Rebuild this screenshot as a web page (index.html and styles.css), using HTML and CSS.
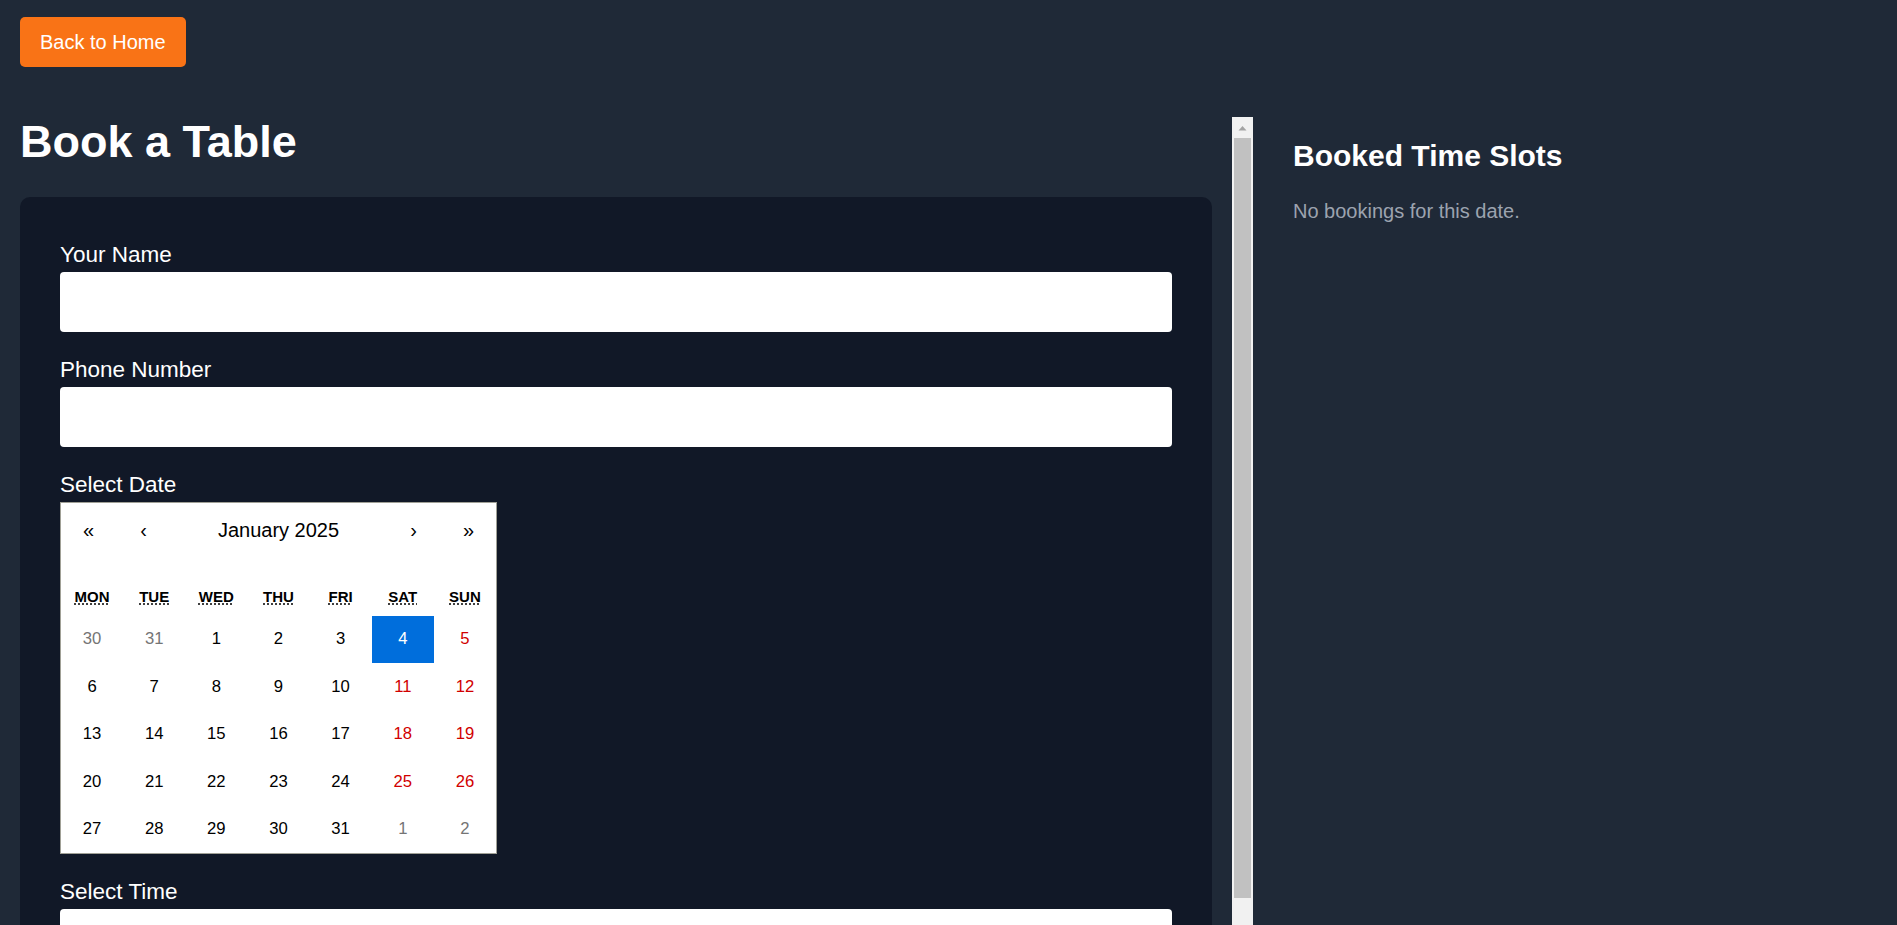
FILE: index.html
```html
<!DOCTYPE html>
<html lang="en">
<head>
<meta charset="utf-8">
<title>Book a Table</title>
<link rel="stylesheet" href="styles.css">
</head>
<body>
<div class="page">
  <button class="back-btn" type="button">Back to Home</button>
  <div class="main">
    <section class="booking">
      <div class="booking-scroll">
        <h1 class="title">Book a Table</h1>
        <form class="card">
          <div class="field">
            <label class="label" for="name">Your Name</label>
            <input class="input" id="name" type="text">
          </div>
          <div class="field">
            <label class="label" for="phone">Phone Number</label>
            <input class="input" id="phone" type="text">
          </div>
          <div class="field">
            <span class="label">Select Date</span>
            <div class="cal">
              <div class="cal-nav">
                <button type="button" class="cal-arrow">«</button>
                <button type="button" class="cal-arrow">‹</button>
                <button type="button" class="cal-label">January 2025</button>
                <button type="button" class="cal-arrow">›</button>
                <button type="button" class="cal-arrow">»</button>
              </div>
              <div class="cal-weekdays">
                <div class="wd"><abbr title="Monday">Mon</abbr></div>
                <div class="wd"><abbr title="Tuesday">Tue</abbr></div>
                <div class="wd"><abbr title="Wednesday">Wed</abbr></div>
                <div class="wd"><abbr title="Thursday">Thu</abbr></div>
                <div class="wd"><abbr title="Friday">Fri</abbr></div>
                <div class="wd"><abbr title="Saturday">Sat</abbr></div>
                <div class="wd"><abbr title="Sunday">Sun</abbr></div>
              </div>
              <div class="cal-days">
                <button type="button" class="tile other">30</button>
                <button type="button" class="tile other">31</button>
                <button type="button" class="tile">1</button>
                <button type="button" class="tile">2</button>
                <button type="button" class="tile">3</button>
                <button type="button" class="tile active">4</button>
                <button type="button" class="tile weekend">5</button>
                <button type="button" class="tile">6</button>
                <button type="button" class="tile">7</button>
                <button type="button" class="tile">8</button>
                <button type="button" class="tile">9</button>
                <button type="button" class="tile">10</button>
                <button type="button" class="tile weekend">11</button>
                <button type="button" class="tile weekend">12</button>
                <button type="button" class="tile">13</button>
                <button type="button" class="tile">14</button>
                <button type="button" class="tile">15</button>
                <button type="button" class="tile">16</button>
                <button type="button" class="tile">17</button>
                <button type="button" class="tile weekend">18</button>
                <button type="button" class="tile weekend">19</button>
                <button type="button" class="tile">20</button>
                <button type="button" class="tile">21</button>
                <button type="button" class="tile">22</button>
                <button type="button" class="tile">23</button>
                <button type="button" class="tile">24</button>
                <button type="button" class="tile weekend">25</button>
                <button type="button" class="tile weekend">26</button>
                <button type="button" class="tile">27</button>
                <button type="button" class="tile">28</button>
                <button type="button" class="tile">29</button>
                <button type="button" class="tile">30</button>
                <button type="button" class="tile">31</button>
                <button type="button" class="tile other">1</button>
                <button type="button" class="tile other">2</button>
              </div>
            </div>
          </div>
          <div class="field">
            <label class="label" for="time">Select Time</label>
            <input class="input" id="time" type="text">
          </div>
        </form>
      </div>
      <div class="scrollbar" aria-hidden="true">
        <div class="sb-up">
          <svg width="21" height="21" viewBox="0 0 21 21"><path d="M6.5 13.5 L10.5 9 L14.5 13.5 Z" fill="#a3a3a3"/></svg>
        </div>
        <div class="sb-thumb"></div>
      </div>
    </section>
    <aside class="slots">
      <h2 class="slots-title">Booked Time Slots</h2>
      <p class="slots-empty">No bookings for this date.</p>
    </aside>
  </div>
</div>
</body>
</html>
```

FILE: styles.css
```css
html, body {
  margin: 0;
  padding: 0;
  height: 100%;
  overflow: hidden;
}

body {
  background: #1f2937;
  font-family: "Liberation Sans", Arial, Helvetica, sans-serif;
  color: #ffffff;
}

.page {
  height: 100vh;
  overflow: hidden;
  box-sizing: border-box;
  padding: 17px 0 0 20px;
}

.back-btn {
  display: block;
  height: 50px;
  padding: 0 20px;
  border: 0;
  border-radius: 5px;
  background: #f97316;
  color: #ffffff;
  font-family: inherit;
  font-size: 20px;
  line-height: 50px;
  cursor: pointer;
}

.main {
  display: flex;
  align-items: flex-start;
  margin-top: 30px;
}

.booking {
  flex: 0 0 1233px;
  display: flex;
  height: 808px;
  margin-top: 20px;
  overflow: hidden;
}

.booking-scroll {
  flex: 1 1 auto;
  min-width: 0;
  padding-right: 20px;
  overflow: hidden;
}

.scrollbar {
  flex: 0 0 21px;
  display: flex;
  flex-direction: column;
  background: #f1f1f1;
}

.sb-up {
  height: 21px;
  flex: 0 0 21px;
}

.sb-up svg {
  display: block;
}

.sb-thumb {
  flex: 0 0 760px;
  margin: 0 2px;
  background: #c1c1c1;
}

.title {
  margin: 0 0 30px;
  font-size: 45px;
  line-height: 50px;
  font-weight: 700;
  color: #ffffff;
}

.card {
  display: flex;
  flex-direction: column;
  gap: 20px;
  padding: 40px;
  background: #111827;
  border-radius: 10px;
}

.field {
  display: flex;
  flex-direction: column;
}

.label {
  display: block;
  font-size: 22.5px;
  line-height: 35px;
  color: #ffffff;
}

.input {
  display: block;
  box-sizing: border-box;
  width: 100%;
  height: 60px;
  margin: 0;
  padding: 0 15px;
  border: 0;
  border-radius: 4px;
  background: #ffffff;
  font-family: inherit;
  font-size: 20px;
  color: #111827;
}

/* calendar */
.cal {
  width: 437px;
  box-sizing: border-box;
  background: #ffffff;
  border: 1px solid #a0a096;
  font-family: "Liberation Sans", Arial, Helvetica, sans-serif;
  font-size: 20px;
  line-height: 22.5px;
  color: #000000;
}

.cal-nav {
  display: flex;
  height: 55px;
  margin-bottom: 20px;
}

.cal-nav button {
  margin: 0;
  padding: 0;
  border: 0;
  background: none;
  font-family: inherit;
  font-size: 20px;
  color: #000000;
  cursor: pointer;
}

.cal-arrow {
  flex: 0 0 55px;
}

.cal-label {
  flex: 1 1 auto;
}

.cal-weekdays {
  display: grid;
  grid-template-columns: repeat(7, 1fr);
  text-align: center;
  text-transform: uppercase;
  font-weight: 700;
  font-size: 15px;
  line-height: 22.5px;
}

.wd {
  padding: 7.5px;
}

.wd abbr {
  text-decoration: underline dotted;
  text-underline-offset: 2px;
}

.cal-days {
  display: grid;
  grid-template-columns: repeat(7, 1fr);
}

.tile {
  height: 47.5px;
  margin: 0;
  padding: 0;
  border: 0;
  background: none;
  text-align: center;
  font-family: inherit;
  font-size: 16.67px;
  line-height: 22.5px;
  color: #000000;
}

.tile.weekend {
  color: #d10000;
}

.tile.other {
  color: #757575;
}

.tile.active {
  background: #006edc;
  color: #ffffff;
}

/* right column */
.slots {
  flex: 1 1 auto;
  padding: 39px 40px 40px;
}

.slots-title {
  margin: 0 0 20px;
  font-size: 30px;
  line-height: 40px;
  font-weight: 700;
  color: #ffffff;
}

.slots-empty {
  margin: 0;
  font-size: 20px;
  line-height: 30px;
  color: #9ca3af;
}
```
